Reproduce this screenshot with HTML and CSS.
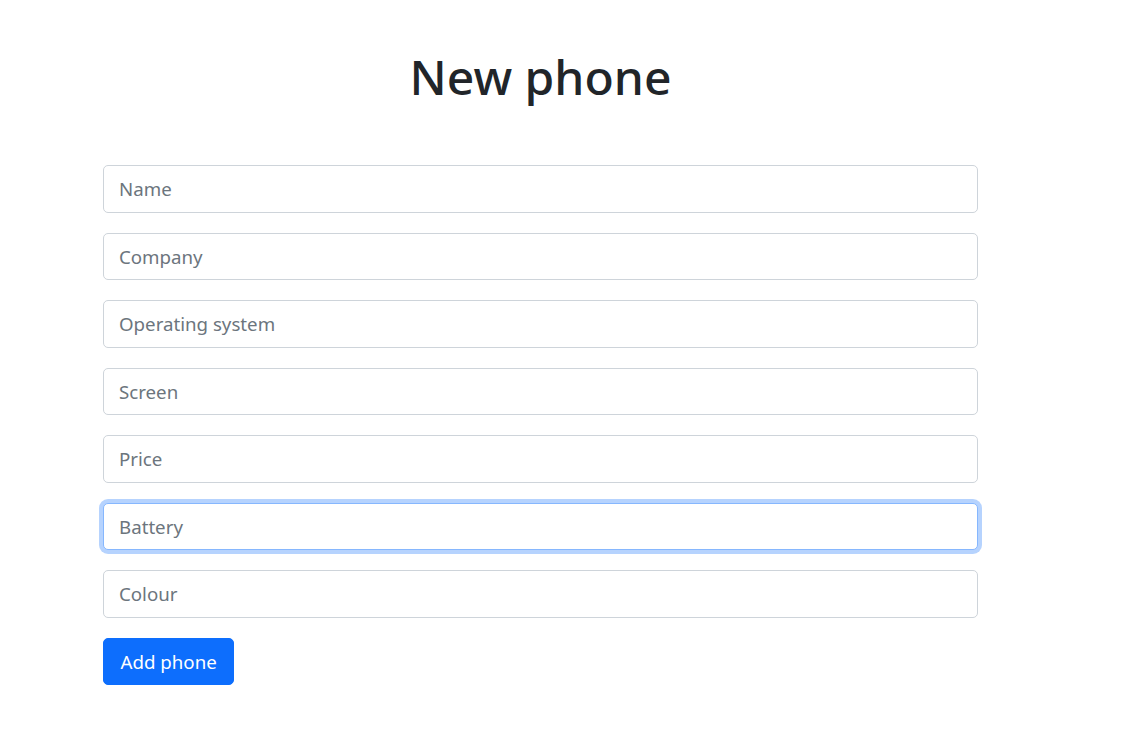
FILE: index.html
```html
<!DOCTYPE html>
<html lang="en">
<head>
<meta charset="utf-8">
<title>New phone</title>
<link rel="stylesheet" href="styles.css">
</head>
<body>
<main class="page">
  <h1 class="title">New phone</h1>
  <form class="phone-form">
    <input class="field" type="text" placeholder="Name">
    <input class="field" type="text" placeholder="Company">
    <input class="field" type="text" placeholder="Operating system">
    <input class="field" type="text" placeholder="Screen">
    <input class="field" type="text" placeholder="Price">
    <input class="field field-focus" type="text" placeholder="Battery" autofocus>
    <input class="field" type="text" placeholder="Colour">
    <div class="actions"><button class="btn-primary" type="button">Add phone</button></div>
  </form>
</main>
</body>
</html>
```
FILE: styles.css
```css
* { box-sizing: border-box; }
html, body { margin: 0; padding: 0; background: #fff; }
body {
  font-family: "Noto Sans", "Open Sans", sans-serif;
  color: #212529;
}
.page {
  width: 875px;
  margin-left: 103px;
  padding-top: 48px;
}
.title {
  margin: 0 0 59.5px;
  text-align: center;
  font-size: 48px;
  font-weight: 500;
  line-height: 1.2;
  color: #212529;
}
.phone-form {
  display: flex;
  flex-direction: column;
  gap: 20px;
}
.field {
  display: block;
  width: 100%;
  height: 47.5px;
  padding: 8px 15px;
  font-family: inherit;
  font-size: 18.7px;
  color: #212529;
  background: #fff;
  border: 1px solid #ced4da;
  border-radius: 5px;
  outline: none;
  caret-color: #212529;
}
.field::placeholder { color: #6c757d; opacity: 1; }
.field-focus, .field:focus {
  border-color: #86b7fe;
  box-shadow: 0 0 0 4px rgba(13, 110, 253, 0.3);
}
.actions { display: flex; }
.btn-primary {
  height: 47px;
  padding: 0 16.5px;
  font-family: inherit;
  font-size: 18.7px;
  color: #fff;
  background: #0d6efd;
  border: 1px solid #0d6efd;
  border-radius: 5px;
}
```
